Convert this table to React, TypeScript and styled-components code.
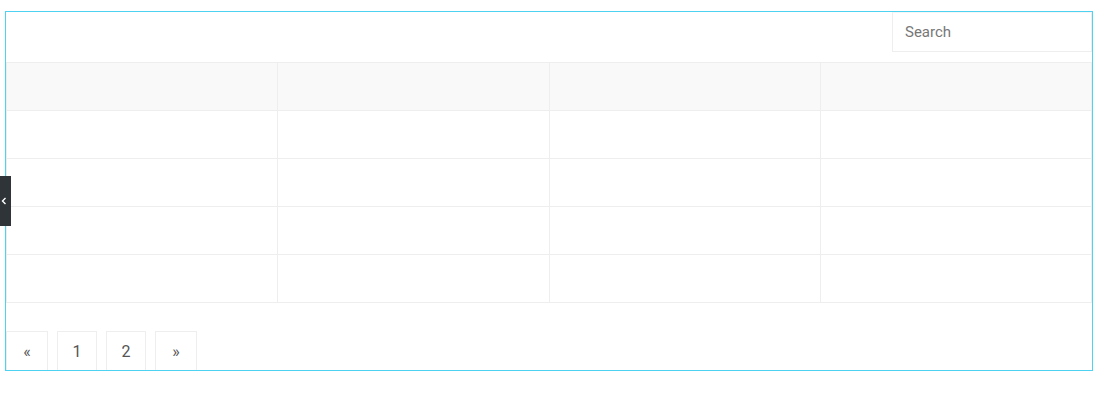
import React from 'react'
import styled, { createGlobalStyle } from 'styled-components'

const GlobalStyle = createGlobalStyle`
  body {
    margin: 0;
    background: #fff;
    font-family: Roboto, 'Liberation Sans', sans-serif;
  }
`

const columns = 4
const rows = 4
const pages = [
  { label: '«', arrow: true },
  { label: '1', arrow: false },
  { label: '2', arrow: false },
  { label: '»', arrow: true },
]

const App = () => {
  return (
    <>
      <GlobalStyle />
      <Page>
        <Panel>
          <Toolbar>
            <SearchInput placeholder="Search" />
          </Toolbar>
          <Table>
            <thead>
              <tr>
                {Array.from({ length: columns }).map((_, i) => (
                  <HeadCell key={i} />
                ))}
              </tr>
            </thead>
            <tbody>
              {Array.from({ length: rows }).map((_, r) => (
                <tr key={r}>
                  {Array.from({ length: columns }).map((_, c) => (
                    <Cell key={c} />
                  ))}
                </tr>
              ))}
            </tbody>
          </Table>
          <Pagination>
            {pages.map((p) => (
              <PageButton key={p.label} $arrow={p.arrow}>
                {p.label}
              </PageButton>
            ))}
          </Pagination>
        </Panel>
      </Page>
      <SideToggle>
        <svg width="6" height="8" viewBox="0 0 6 8">
          <path d="M4.5 1 L1.5 4 L4.5 7" fill="none" stroke="#fff" strokeWidth="1.4" />
        </svg>
      </SideToggle>
    </>
  )
}

const Page = styled.div`
  padding: 11px 0 0 5px;
`

const Panel = styled.div`
  width: 1088px;
  height: 360px;
  box-sizing: border-box;
  border: 1px solid #4dd2f2;
  display: flex;
  flex-direction: column;
  overflow: hidden;
`

const Toolbar = styled.div`
  display: flex;
  justify-content: flex-end;
  padding-bottom: 10px;
`

const SearchInput = styled.input`
  width: 200px;
  height: 40px;
  box-sizing: border-box;
  border: 1px solid #eee;
  border-top-color: #f6f6f6;
  padding: 0 12px;
  font-family: Roboto, 'Liberation Sans', sans-serif;
  font-size: 15px;
  outline: none;

  &::placeholder {
    color: #777;
  }
`

const Table = styled.table`
  width: 100%;
  border-collapse: collapse;
  table-layout: fixed;
`

const HeadCell = styled.th`
  height: 47px;
  padding: 0;
  background: #f9f9f9;
  border: 1px solid #eee;
`

const Cell = styled.td`
  height: 47px;
  padding: 0;
  border: 1px solid #eee;
`

const Pagination = styled.div`
  display: flex;
  gap: 9px;
  margin-top: 28px;
`

const PageButton = styled.button<{ $arrow?: boolean }>`
  height: 40px;
  width: ${(p) => (p.$arrow ? '42px' : '40px')};
  padding: 0;
  box-sizing: border-box;
  background: #fff;
  border: 1px solid #eee;
  color: #555;
  font-family: Roboto, 'Liberation Sans', sans-serif;
  font-size: 16px;
  cursor: pointer;
`

const SideToggle = styled.div`
  position: fixed;
  left: 0;
  top: 176px;
  width: 11px;
  height: 50px;
  box-sizing: border-box;
  padding-right: 3px;
  background: #2f3439;
  display: flex;
  align-items: center;
  justify-content: center;
`

export default App
